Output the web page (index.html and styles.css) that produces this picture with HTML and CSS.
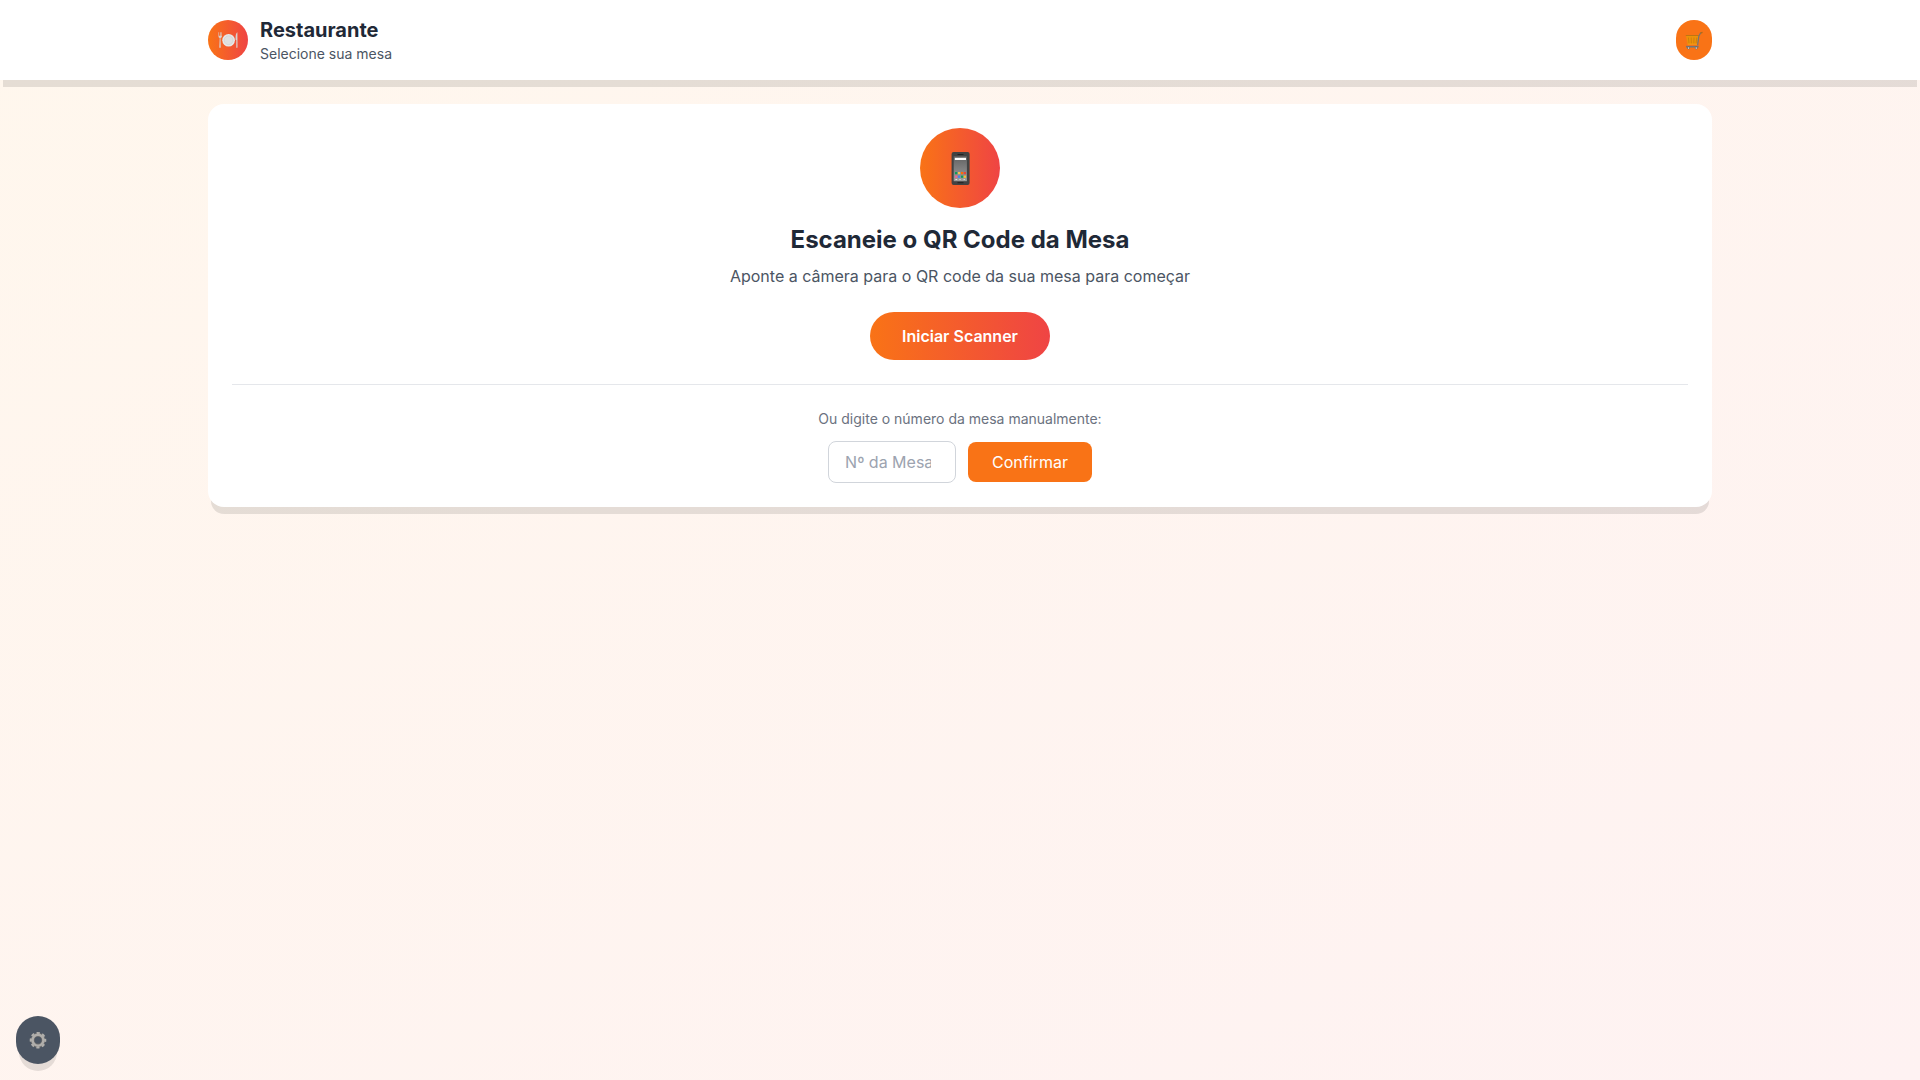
FILE: index.html
```html
<!DOCTYPE html>
<html lang="pt-BR">
<head>
    <meta charset="UTF-8">
    <meta name="viewport" content="width=device-width, initial-scale=1.0">
    <title>Restaurante</title>
    <link rel="stylesheet" href="styles.css">
</head>
<body>
    <header class="header">
        <div class="container header-content">
            <div class="brand">
                <div class="logo">
                    <svg width="20" height="24" viewBox="0 0 20 24" aria-hidden="true">
                        <path d="M.5 4.3v4.2q0 1.3 1.2 1.5L1.3 19q0 .9.7.9t.7-.9L2.5 10q1.4-.2 1.4-1.5V4.3h-.5v3.5h-.8V4.3H2v3.5h-.9V4.3z" fill="#d6d3d1"/>
                        <circle cx="10.6" cy="12.2" r="6.3" fill="#e7e7e7"/>
                        <circle cx="10.6" cy="12.2" r="4.4" fill="#e0e0e0" stroke="#cfcfcf" stroke-width=".6"/>
                        <path d="M19.4 4.2c-1.3.5-1.8 2.9-1.8 5.5v2.4h.7V19q0 .9.6.9t.6-.9z" fill="#d6d3d1"/>
                    </svg>
                </div>
                <div>
                    <h1>Restaurante</h1>
                    <p class="subtitle">Selecione sua mesa</p>
                </div>
            </div>
            <button type="button" class="cart-button" aria-label="Carrinho">
                <svg width="20" height="24" viewBox="0 0 20 24" aria-hidden="true">
                    <path d="M2 7.5h12.6l-1.2 8.8H3.6z" fill="#ee9208"/>
                    <path d="M1.8 7.5h13" stroke="#c07512" stroke-width="1"/>
                    <path d="M4.4 9.5l.6 6M7.2 9.5l.2 6M10 9.5l-.2 6M12.8 9.5l-.7 6" stroke="#c97a10" stroke-width=".8"/>
                    <path d="M3.6 16.2h9.8" stroke="#f4a51c" stroke-width=".8"/>
                    <path d="M16.7 4.8l-1.9 3.4-1.2 9.2" fill="none" stroke="#757575" stroke-width="1.2"/>
                    <path d="M16.3 5.1l2.2-.8" stroke="#a86b1d" stroke-width="1.4"/>
                    <path d="M2 18.7h12.6" stroke="#757575" stroke-width="1.6"/>
                    <circle cx="4.6" cy="20" r="1.3" fill="#616161"/>
                    <circle cx="12.2" cy="20" r="1.3" fill="#616161"/>
                    <circle cx="4.6" cy="20.1" r=".8" fill="#e0e0e0"/>
                    <circle cx="12.2" cy="20.1" r=".8" fill="#e0e0e0"/>
                </svg>
            </button>
        </div>
    </header>

    <main class="container main">
        <section class="card">
            <div class="scan-icon">
                <svg width="20" height="36" viewBox="0 0 20 36" aria-hidden="true">
                    <defs>
                        <linearGradient id="screen" x1="0" y1="0" x2="0" y2="1">
                            <stop offset="0" stop-color="#616161"/>
                            <stop offset="1" stop-color="#9e9e9e"/>
                        </linearGradient>
                    </defs>
                    <rect x="1.6" y="2" width="18" height="33" rx="2" fill="#424242"/>
                    <rect x="3.7" y="6.2" width="13.2" height="25" fill="url(#screen)"/>
                    <rect x="7.5" y="4" width="6" height="1" fill="#212121"/>
                    <rect x="7.5" y="32.2" width="6" height="1" fill="#212121"/>
                    <rect x="4.8" y="7.8" width="11.2" height="2.2" fill="#fff"/>
                    <rect x="5" y="22" width="2.2" height="2.2" fill="#0f9d58"/>
                    <rect x="8" y="22" width="2.2" height="2.2" fill="#f4c24a"/>
                    <rect x="11" y="22" width="2.2" height="2.2" fill="#ff6d00"/>
                    <rect x="13.8" y="22" width="2.2" height="2.2" fill="#e8453c"/>
                    <rect x="5" y="25.6" width="2.2" height="2.2" fill="#f06292"/>
                    <rect x="8" y="25.6" width="2.2" height="2.2" fill="#4285f4"/>
                    <rect x="11" y="25.6" width="2.2" height="2.2" fill="#0f9d58"/>
                    <rect x="13.8" y="25.6" width="2.2" height="2.2" fill="#fbc02d"/>
                    <path d="M5.4 29.5h1.8M9.4 29.5h1.2M13.6 29.5h1.2" stroke="#e0e0e0"/>
                </svg>
            </div>
            <h2>Escaneie o QR Code da Mesa</h2>
            <p class="description">Aponte a câmera para o QR code da sua mesa para começar</p>
            <button type="button" class="scan-button">Iniciar Scanner</button>

            <form class="manual" id="table-form">
                <label for="table-number">Ou digite o número da mesa manualmente:</label>
                <div class="manual-inputs">
                    <input type="number" id="table-number" min="1" placeholder="Nº da Mesa">
                    <button type="submit" class="confirm-button">Confirmar</button>
                </div>
            </form>
        </section>
    </main>

    <button type="button" class="admin-button" aria-label="Administração">
        <svg width="20" height="24" viewBox="0 0 20 24" aria-hidden="true">
            <circle cx="10" cy="12.2" r="5.4" fill="none" stroke="#6b6b6b" stroke-width="4"/>
            <circle cx="10" cy="12.2" r="7.2" fill="none" stroke="#b0aeab" stroke-width="2.2" stroke-dasharray="3.2 2.455" stroke-dashoffset="1.6"/>
            <circle cx="10" cy="12.2" r="5.4" fill="none" stroke="#b0aeab" stroke-width="2.4"/>
        </svg>
    </button>
</body>
</html>
```
FILE: styles.css
```css
* {
    margin: 0;
    padding: 0;
    box-sizing: border-box;
}

body {
    font-family: Inter, sans-serif;
    font-size: 16px;
    line-height: 24px;
    color: #1f2937;
    background: linear-gradient(to bottom right, #fff7ed, #fef2f2);
    min-height: 100vh;
}

button,
input {
    font: inherit;
    border: none;
}

button {
    color: white;
    cursor: pointer;
}

svg {
    display: block;
}

.container {
    width: 100%;
    max-width: 1536px;
    margin: 0 auto;
    padding: 16px;
}

/* Header */
.header {
    background-color: white;
    box-shadow: 0 10px 0 -3px rgba(0, 0, 0, 0.1);
}

.header-content {
    display: flex;
    justify-content: space-between;
    align-items: center;
}

.brand {
    display: flex;
    align-items: center;
    gap: 12px;
}

.logo {
    display: flex;
    justify-content: center;
    align-items: center;
    width: 40px;
    height: 40px;
    border-radius: 50%;
    background: linear-gradient(to right, #f97316, #ef4444);
}

h1 {
    font-size: 20px;
    line-height: 28px;
    font-weight: 700;
}

.subtitle {
    font-size: 14px;
    line-height: 20px;
    color: #4b5563;
}

.cart-button {
    padding: 8px;
    border-radius: 24px;
    background-color: #f97316;
}

/* Table selection */
.main {
    padding-top: 24px;
}

.card {
    display: flex;
    flex-direction: column;
    align-items: center;
    padding: 24px;
    border-radius: 16px;
    background-color: white;
    box-shadow: 0 10px 0 -3px rgba(0, 0, 0, 0.1);
    text-align: center;
}

.scan-icon {
    display: flex;
    justify-content: center;
    align-items: center;
    width: 80px;
    height: 80px;
    margin-bottom: 16px;
    border-radius: 50%;
    background: linear-gradient(to right, #f97316, #ef4444);
}

h2 {
    font-size: 24px;
    line-height: 32px;
    font-weight: 700;
    margin-bottom: 8px;
}

.description {
    color: #4b5563;
    margin-bottom: 24px;
}

.scan-button {
    padding: 12px 32px;
    border-radius: 24px;
    background: linear-gradient(to right, #f97316, #ef4444);
    font-weight: 600;
}

.manual {
    align-self: stretch;
    margin-top: 24px;
    padding-top: 24px;
    border-top: 1px solid #e5e7eb;
}

.manual label {
    display: block;
    margin-bottom: 12px;
    font-size: 14px;
    line-height: 20px;
    color: #6b7280;
}

.manual-inputs {
    display: flex;
    justify-content: center;
    align-items: center;
    gap: 12px;
}

.manual-inputs input {
    width: 128px;
    padding: 8px 16px;
    border: 1px solid #d1d5db;
    border-radius: 8px;
    background-color: white;
    color: #1f2937;
}

.manual-inputs input::placeholder {
    color: #9ca3af;
}

.manual-inputs input::-webkit-inner-spin-button {
    appearance: none;
    width: 8px;
}

.confirm-button {
    padding: 8px 24px;
    border-radius: 8px;
    background-color: #f97316;
}

/* Floating settings button */
.admin-button {
    position: fixed;
    bottom: 16px;
    left: 16px;
    padding: 12px;
    border-radius: 24px;
    background-color: #4b5563;
    box-shadow: 0 10px 0 -3px rgba(0, 0, 0, 0.1);
}
```
